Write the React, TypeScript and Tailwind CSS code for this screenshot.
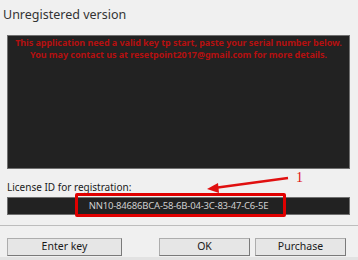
export default function App() {
	const font = { fontFamily: '"Noto Sans", "Open Sans", sans-serif' };

	return (
		<div
			className="relative flex h-[260px] w-[358px] flex-col overflow-hidden bg-[#f0f0f0]"
			style={font}
		>
			<div className="h-[4px]" />
			<div className="mt-[2px] pl-[3px] text-[12.5px] leading-[18px] text-[#333]">
				Unregistered version
			</div>
			<div className="mx-[7px] mt-[11px] mr-[8px] h-[134px] border border-[#707070] bg-[#222222] pt-[1px] text-center text-[9px] font-bold leading-[12px] tracking-[-0.05px] text-[#b41010]">
				<div className="whitespace-nowrap">
					This application need a valid key tp start, paste your serial number below.
				</div>
				<div className="whitespace-nowrap">
					You may contact us at resetpoint2017@gmail.com for more details.
				</div>
			</div>
			<div className="mt-[11px] pl-[7px] text-[10px] leading-[14px] text-[#1a1a1a]">
				License ID for registration:
			</div>
			<div className="mx-[7px] mt-[3px] mr-[8px] flex h-[18px] items-center justify-center border border-[#707070] bg-[#222222] text-[9.5px] tracking-[-0.2px] text-[#cfcfcf]">
				NN10-84686BCA-58-6B-04-3C-83-47-C6-5E
			</div>
			<div className="mt-[10px] h-px bg-[#bdbdbd]" />
			<div className="mt-[12px] flex px-[7px] text-[10.5px] text-[#1a1a1a]">
				<button className="h-[18px] w-[115px] border border-[#adadad] border-r-[#7a7a7a] border-b-[#7a7a7a] bg-[#e6e6e6]">
					Enter key
				</button>
				<span className="flex-1" />
				<button className="h-[18px] w-[91px] border border-[#adadad] border-r-[#7a7a7a] border-b-[#7a7a7a] bg-[#e6e6e6]">
					OK
				</button>
				<button className="ml-[5px] h-[18px] w-[91px] border border-[#adadad] border-r-[#7a7a7a] border-b-[#7a7a7a] bg-[#e6e6e6]">
					Purchase
				</button>
				<span className="w-[5px]" />
			</div>
			<div className="mt-[1px] flex-1 bg-[#e2e2e2]" />

			<div className="absolute left-[75px] top-[193px] h-[24px] w-[211px] rounded-[2px] border-[3px] border-[#e00000]" />
			<svg className="absolute left-0 top-0" width="358" height="260">
				<line x1="288" y1="178" x2="214" y2="188" stroke="#e01010" strokeWidth="2.5" />
				<polygon points="207,189 218,183 219,193" fill="#e01010" />
			</svg>
			<div
				className="absolute left-[296px] top-[170px] text-[14px] leading-[16px] text-[#e01010]"
				style={{ fontFamily: '"Liberation Serif", serif' }}
			>
				1
			</div>
		</div>
	);
}
